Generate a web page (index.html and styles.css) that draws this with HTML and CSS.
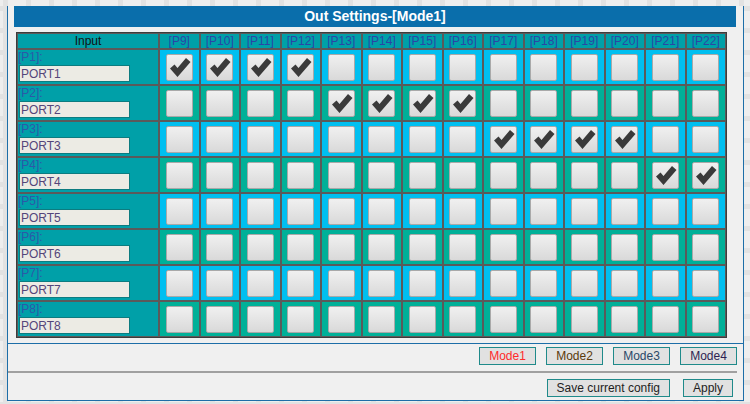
FILE: index.html
```html
<!DOCTYPE html>
<html>
<head>
<meta charset="utf-8">
<title>Out Settings</title>
<link rel="stylesheet" href="styles.css">
</head>
<body>
<div class="panel">
  <div class="title">Out Settings-[Mode1]</div>
  <div class="grid-wrap">
    <table class="grid">
      <thead>
        <tr>
          <th class="input-col">Input</th>
          <th>[P9]</th><th>[P10]</th><th>[P11]</th><th>[P12]</th><th>[P13]</th><th>[P14]</th><th>[P15]</th><th>[P16]</th><th>[P17]</th><th>[P18]</th><th>[P19]</th><th>[P20]</th><th>[P21]</th><th>[P22]</th>
        </tr>
      </thead>
      <tbody>
        <tr class="row-a">
          <td class="input-cell"><div class="plabel">[P1]:</div><input class="pname" type="text" value="PORT1"></td>
          <td><span class="box"><svg viewBox="0 0 25 25"><polygon points="3,13.5 7.5,9.5 10.5,13 19,3 23.5,7 10.5,22"/></svg></span></td>
          <td><span class="box"><svg viewBox="0 0 25 25"><polygon points="3,13.5 7.5,9.5 10.5,13 19,3 23.5,7 10.5,22"/></svg></span></td>
          <td><span class="box"><svg viewBox="0 0 25 25"><polygon points="3,13.5 7.5,9.5 10.5,13 19,3 23.5,7 10.5,22"/></svg></span></td>
          <td><span class="box"><svg viewBox="0 0 25 25"><polygon points="3,13.5 7.5,9.5 10.5,13 19,3 23.5,7 10.5,22"/></svg></span></td>
          <td><span class="box"></span></td><td><span class="box"></span></td><td><span class="box"></span></td><td><span class="box"></span></td>
          <td><span class="box"></span></td><td><span class="box"></span></td><td><span class="box"></span></td><td><span class="box"></span></td>
          <td><span class="box"></span></td><td><span class="box"></span></td>
        </tr>
        <tr class="row-b">
          <td class="input-cell"><div class="plabel">[P2]:</div><input class="pname" type="text" value="PORT2"></td>
          <td><span class="box"></span></td><td><span class="box"></span></td><td><span class="box"></span></td><td><span class="box"></span></td>
          <td><span class="box"><svg viewBox="0 0 25 25"><polygon points="3,13.5 7.5,9.5 10.5,13 19,3 23.5,7 10.5,22"/></svg></span></td>
          <td><span class="box"><svg viewBox="0 0 25 25"><polygon points="3,13.5 7.5,9.5 10.5,13 19,3 23.5,7 10.5,22"/></svg></span></td>
          <td><span class="box"><svg viewBox="0 0 25 25"><polygon points="3,13.5 7.5,9.5 10.5,13 19,3 23.5,7 10.5,22"/></svg></span></td>
          <td><span class="box"><svg viewBox="0 0 25 25"><polygon points="3,13.5 7.5,9.5 10.5,13 19,3 23.5,7 10.5,22"/></svg></span></td>
          <td><span class="box"></span></td><td><span class="box"></span></td><td><span class="box"></span></td><td><span class="box"></span></td>
          <td><span class="box"></span></td><td><span class="box"></span></td>
        </tr>
        <tr class="row-a">
          <td class="input-cell"><div class="plabel">[P3]:</div><input class="pname" type="text" value="PORT3"></td>
          <td><span class="box"></span></td><td><span class="box"></span></td><td><span class="box"></span></td><td><span class="box"></span></td>
          <td><span class="box"></span></td><td><span class="box"></span></td><td><span class="box"></span></td><td><span class="box"></span></td>
          <td><span class="box"><svg viewBox="0 0 25 25"><polygon points="3,13.5 7.5,9.5 10.5,13 19,3 23.5,7 10.5,22"/></svg></span></td>
          <td><span class="box"><svg viewBox="0 0 25 25"><polygon points="3,13.5 7.5,9.5 10.5,13 19,3 23.5,7 10.5,22"/></svg></span></td>
          <td><span class="box"><svg viewBox="0 0 25 25"><polygon points="3,13.5 7.5,9.5 10.5,13 19,3 23.5,7 10.5,22"/></svg></span></td>
          <td><span class="box"><svg viewBox="0 0 25 25"><polygon points="3,13.5 7.5,9.5 10.5,13 19,3 23.5,7 10.5,22"/></svg></span></td>
          <td><span class="box"></span></td><td><span class="box"></span></td>
        </tr>
        <tr class="row-b">
          <td class="input-cell"><div class="plabel">[P4]:</div><input class="pname" type="text" value="PORT4"></td>
          <td><span class="box"></span></td><td><span class="box"></span></td><td><span class="box"></span></td><td><span class="box"></span></td>
          <td><span class="box"></span></td><td><span class="box"></span></td><td><span class="box"></span></td><td><span class="box"></span></td>
          <td><span class="box"></span></td><td><span class="box"></span></td><td><span class="box"></span></td><td><span class="box"></span></td>
          <td><span class="box"><svg viewBox="0 0 25 25"><polygon points="3,13.5 7.5,9.5 10.5,13 19,3 23.5,7 10.5,22"/></svg></span></td>
          <td><span class="box"><svg viewBox="0 0 25 25"><polygon points="3,13.5 7.5,9.5 10.5,13 19,3 23.5,7 10.5,22"/></svg></span></td>
        </tr>
        <tr class="row-a">
          <td class="input-cell"><div class="plabel">[P5]:</div><input class="pname" type="text" value="PORT5"></td>
          <td><span class="box"></span></td><td><span class="box"></span></td><td><span class="box"></span></td><td><span class="box"></span></td>
          <td><span class="box"></span></td><td><span class="box"></span></td><td><span class="box"></span></td><td><span class="box"></span></td>
          <td><span class="box"></span></td><td><span class="box"></span></td><td><span class="box"></span></td><td><span class="box"></span></td>
          <td><span class="box"></span></td><td><span class="box"></span></td>
        </tr>
        <tr class="row-b">
          <td class="input-cell"><div class="plabel">[P6]:</div><input class="pname" type="text" value="PORT6"></td>
          <td><span class="box"></span></td><td><span class="box"></span></td><td><span class="box"></span></td><td><span class="box"></span></td>
          <td><span class="box"></span></td><td><span class="box"></span></td><td><span class="box"></span></td><td><span class="box"></span></td>
          <td><span class="box"></span></td><td><span class="box"></span></td><td><span class="box"></span></td><td><span class="box"></span></td>
          <td><span class="box"></span></td><td><span class="box"></span></td>
        </tr>
        <tr class="row-a">
          <td class="input-cell"><div class="plabel">[P7]:</div><input class="pname" type="text" value="PORT7"></td>
          <td><span class="box"></span></td><td><span class="box"></span></td><td><span class="box"></span></td><td><span class="box"></span></td>
          <td><span class="box"></span></td><td><span class="box"></span></td><td><span class="box"></span></td><td><span class="box"></span></td>
          <td><span class="box"></span></td><td><span class="box"></span></td><td><span class="box"></span></td><td><span class="box"></span></td>
          <td><span class="box"></span></td><td><span class="box"></span></td>
        </tr>
        <tr class="row-b">
          <td class="input-cell"><div class="plabel">[P8]:</div><input class="pname" type="text" value="PORT8"></td>
          <td><span class="box"></span></td><td><span class="box"></span></td><td><span class="box"></span></td><td><span class="box"></span></td>
          <td><span class="box"></span></td><td><span class="box"></span></td><td><span class="box"></span></td><td><span class="box"></span></td>
          <td><span class="box"></span></td><td><span class="box"></span></td><td><span class="box"></span></td><td><span class="box"></span></td>
          <td><span class="box"></span></td><td><span class="box"></span></td>
        </tr>
      </tbody>
    </table>
  </div>
  <div class="modes">
    <button class="btn mode mode1">Mode1</button>
    <button class="btn mode mode2">Mode2</button>
    <button class="btn mode mode3">Mode3</button>
    <button class="btn mode mode4">Mode4</button>
  </div>
  <div class="sep"></div>
  <div class="actions">
    <button class="btn">Save current config</button>
    <button class="btn">Apply</button>
  </div>
</div>
</body>
</html>
```

FILE: styles.css
```css
html, body {
  margin: 0;
  padding: 0;
}
body {
  width: 750px;
  height: 404px;
  overflow: hidden;
  font-family: "Liberation Sans", Arial, sans-serif;
  font-size: 12px;
  background-color: #eeeeee;
  background-image:
    linear-gradient(90deg, #e2e2e2 0 5px, transparent 5px),
    linear-gradient(#e2e2e2 0 5px, transparent 5px);
  background-size: 23px 22px;
  background-position: 3px 6px;
}
.panel {
  box-sizing: border-box;
  margin: 6px 0 0 7px;
  width: 737px;
  height: 395px;
  background: #f0f0f0;
  border: 1px solid #1d6ea8;
  border-top: none;
}
.title {
  margin: 0 7px 0 6px;
  height: 21px;
  line-height: 21px;
  background: #0a6eab;
  color: #ffffff;
  font-weight: bold;
  font-size: 14px;
  text-align: center;
}
.grid-wrap {
  padding: 5px 0 5px 8px;
}
.grid {
  table-layout: fixed;
  width: 711px;
  border-collapse: separate;
  border-spacing: 0;
  border: 1px solid #3c3c3c;
}
.grid th, .grid td {
  border: 1px solid #5a5a5a;
  padding: 0;
}
.grid th {
  height: 14px;
  line-height: 14px;
  background: #00a0a8;
  color: #2a46a6;
  font-weight: normal;
  font-size: 12px;
  text-align: center;
}
.grid th.input-col {
  width: 140px;
  color: #111111;
}
.grid td {
  height: 34px;
  text-align: center;
  vertical-align: middle;
}
.row-a td { background: #00bff0; }
.row-b td { background: #00b098; }
.grid td.input-cell {
  background: #00a0a8;
  text-align: left;
  vertical-align: top;
}
.plabel {
  height: 14px;
  line-height: 14px;
  color: #2d58a8;
  font-size: 12px;
}
.pname {
  display: block;
  box-sizing: border-box;
  margin: 1px 0 0 1px;
  width: 111px;
  height: 17px;
  padding: 0 1px;
  border: 1px solid #0c7c80;
  background: #ecebe4;
  color: #54467a;
  font-family: "Liberation Sans", Arial, sans-serif;
  font-size: 12px;
  outline: none;
}
.box {
  display: block;
  box-sizing: border-box;
  width: 27px;
  height: 27px;
  margin: 0 auto;
  border: 1px solid #a9a9a9;
  border-radius: 2px;
  background: linear-gradient(#f0f0f0, #d9d9d9);
}
.box svg {
  display: block;
  width: 25px;
  height: 25px;
  fill: #3a3a3a;
}
.modes {
  border-top: 1px solid #1d6ea8;
  padding: 3px 6px 6px 0;
  display: flex;
  justify-content: flex-end;
  gap: 10px;
}
.sep {
  height: 2px;
  margin-right: 6px;
  background: #a0a0a0;
}
.actions {
  padding: 6px 10px 0 0;
  display: flex;
  justify-content: flex-end;
  gap: 13px;
}
.btn {
  box-sizing: border-box;
  height: 18px;
  padding: 0 9px;
  line-height: 16px;
  border: 1px solid #1f8a8a;
  border-radius: 0;
  background: #e1e1e1;
  color: #1e1e1e;
  font-family: "Liberation Sans", Arial, sans-serif;
  font-size: 12px;
}
.mode {
  width: 57px;
  padding: 0;
}
.mode1 { color: #ff2a2a; }
.mode2 { color: #5a3a0c; }
.mode3 { color: #2a4868; }
.mode4 { color: #2e1f52; }
```
